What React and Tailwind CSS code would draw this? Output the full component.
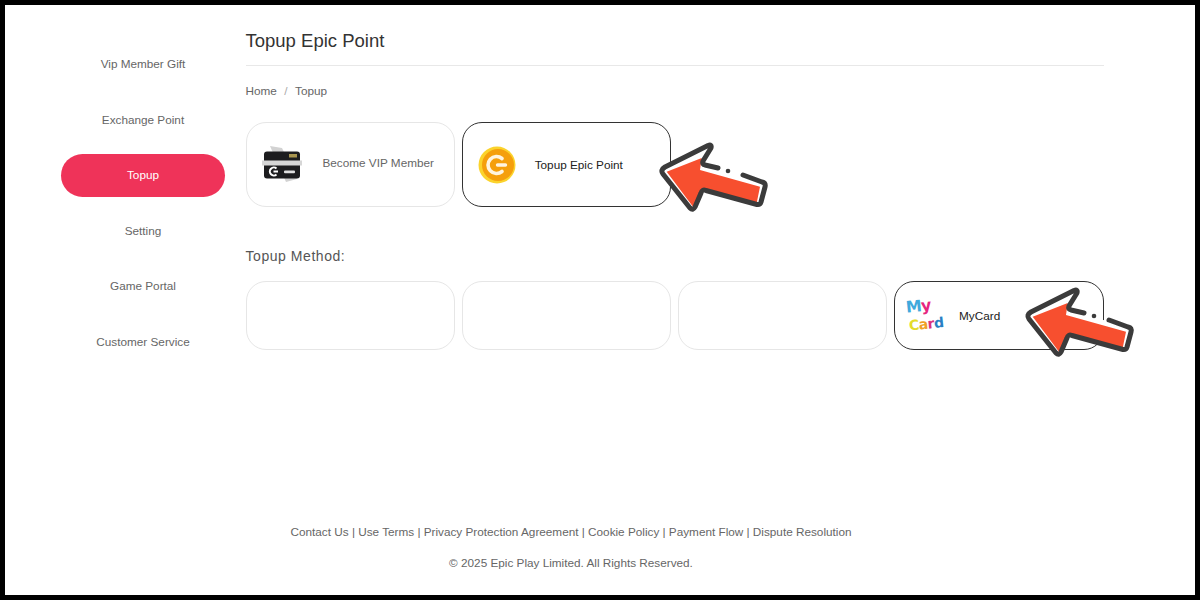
const menu = ['Vip Member Gift', 'Exchange Point', 'Topup', 'Setting', 'Game Portal', 'Customer Service']
const footerLinks = ['Contact Us', 'Use Terms', 'Privacy Protection Agreement', 'Cookie Policy', 'Payment Flow', 'Dispute Resolution']

function VipIcon() {
  return (
    <svg width="42" height="40" viewBox="0 0 42 40" className="shrink-0">
      <path d="M8 1 L20 3 L35 34 L24 37 Z" fill="#d2d2d2" />
      <rect x="2" y="6.5" width="36" height="27" rx="3" fill="#1d1d1f" />
      <rect x="0" y="15.5" width="40" height="5" fill="#d6d6d6" />
      <rect x="27" y="9" width="8" height="3.5" fill="#a8954f" />
      <path d="M14.5 23.5 A4 4 0 1 0 14.5 29.5 M11.5 26.5 H16" fill="none" stroke="#fff" strokeWidth="2" />
      <rect x="22" y="25.5" width="11" height="2.8" rx="1" fill="#e0e0e0" />
    </svg>
  )
}

function CoinIcon() {
  return (
    <svg width="38" height="38" viewBox="0 0 38 38" className="shrink-0">
      <circle cx="19" cy="19" r="18.5" fill="#fbd32c" />
      <circle cx="20" cy="19" r="16" fill="#f59f0d" />
      <path d="M24 12.5 A8.5 8.5 0 1 0 24 25.5" fill="none" stroke="#fff4e0" strokeWidth="3.6" strokeLinecap="round" />
      <path d="M19.5 19 H27.5" fill="none" stroke="#fff4e0" strokeWidth="3.4" strokeLinecap="round" />
    </svg>
  )
}

function MyCardLogo() {
  return (
    <div className="flex h-[40px] w-[38px] shrink-0 -rotate-6 flex-col font-['DejaVu_Sans',sans-serif] font-bold">
      <span className="ml-[2px] -mt-[1px] h-[21px] text-[16px] leading-[21px] tracking-[-1px]">
        <span className="text-[#3fa9dc]">M</span>
        <span className="text-[#e6267f]">y</span>
      </span>
      <span className="ml-[3px] h-[17px] whitespace-nowrap text-[14px] leading-[17px] tracking-[-0.5px]">
        <span className="text-[#e4dc2a]">C</span>
        <span className="text-[#f0a024]">a</span>
        <span className="text-[#d92f7d]">r</span>
        <span className="text-[#2a7fc4]">d</span>
      </span>
    </div>
  )
}

function Arrow({ className }) {
  return (
    <svg width="115" height="75" viewBox="0 0 115 75" className={`absolute ${className}`}>
      <path d="M7 30 L57 5 L48 25 L110 43 L105 65 L48 50 L38 70 Z" fill="#fff" />
      <path d="M11.7 31.7 L46.7 18 L45 30 L105 46.7 L101.7 63 L48 50 L38 66.7 Z" fill="#f74f2f" />
      <path
        d="M63 28 L50 25 Q47 24 48 21 L56 8 Q57 4 53 5.5 L10 27 Q5 30 8 34 L35 68 Q38 71 40 67 L46 53 Q47 49 51 50.5 L102 64.5 Q105 65 106 62 L110 47 Q111 43 107 42 L88 35"
        fill="none"
        stroke="#3b3b3b"
        strokeWidth="5"
        strokeLinejoin="round"
        strokeLinecap="round"
      />
      <circle cx="73" cy="31" r="2.3" fill="#3b3b3b" />
    </svg>
  )
}

function Card({ icon, label, selected, tall, dark, raised }) {
  return (
    <div
      className={`flex items-center rounded-[20px] border bg-white ${tall ? 'h-[85px] pl-[15px]' : 'h-[69px] pl-[10px]'} ${
        selected ? 'border-[#333]' : 'border-[#e6e6e6]'
      }`}
    >
      {icon}
      <span
        className={`text-[11.75px] ${raised ? 'mb-[3px]' : ''} ${tall ? 'ml-[19px]' : 'ml-[16px]'} ${dark ? 'text-[#222]' : 'text-[#666]'}`}
      >
        {label}
      </span>
    </div>
  )
}

export default function App() {
  return (
    <div className="relative box-border h-[600px] w-[1200px] border-[5px] border-black bg-white font-['Liberation_Sans',Arial,sans-serif] flex flex-col overflow-hidden">
      <div className="flex">
        <nav className="ml-[56px] mt-[38px] flex w-[164px] flex-col gap-[12.5px]">
          {menu.map((item) => (
            <div
              key={item}
              className={`flex h-[43px] items-center justify-center rounded-full pb-[1px] text-[11.75px] ${
                item === 'Topup' ? 'bg-[#ef3359] text-white' : 'text-[#666]'
              }`}
            >
              {item}
            </div>
          ))}
        </nav>

        <main className="ml-[20.5px] mt-[12px] w-[858.2px]">
          <h1 className="flex h-[49px] items-center border-b border-[#e8e8e8] text-[18.5px] text-[#333]">Topup Epic Point</h1>
          <div className="mt-[15px] flex h-[20px] items-center text-[11.75px] text-[#666]">
            <span>Home</span>
            <span className="mx-[7.5px] text-[#aaa]">/</span>
            <span>Topup</span>
          </div>

          <div className="mt-[21px] grid grid-cols-4 gap-[6.6px]">
            <Card tall raised icon={<VipIcon />} label="Become VIP Member" />
            <Card tall selected dark icon={<CoinIcon />} label="Topup Epic Point" />
          </div>

          <div className="mt-[39px] flex h-[20px] items-center text-[14px] tracking-[0.55px] text-[#555]">Topup Method:</div>

          <div className="mt-[15px] grid grid-cols-4 gap-[6.6px]">
            <Card />
            <Card />
            <Card />
            <Card selected dark icon={<MyCardLogo />} label="MyCard" />
          </div>
        </main>
      </div>

      <footer className="mt-auto mb-[22px] w-[1132px] text-center text-[11.75px] text-[#666]">
        <div className="flex h-[20px] items-center justify-center">{footerLinks.join(' | ')}</div>
        <div className="mt-[11px] flex h-[20px] items-center justify-center">© 2025 Epic Play Limited. All Rights Reserved.</div>
      </footer>

      <Arrow className="left-[650px] top-[135px]" />
      <Arrow className="left-[1016px] top-[280px]" />
    </div>
  )
}
